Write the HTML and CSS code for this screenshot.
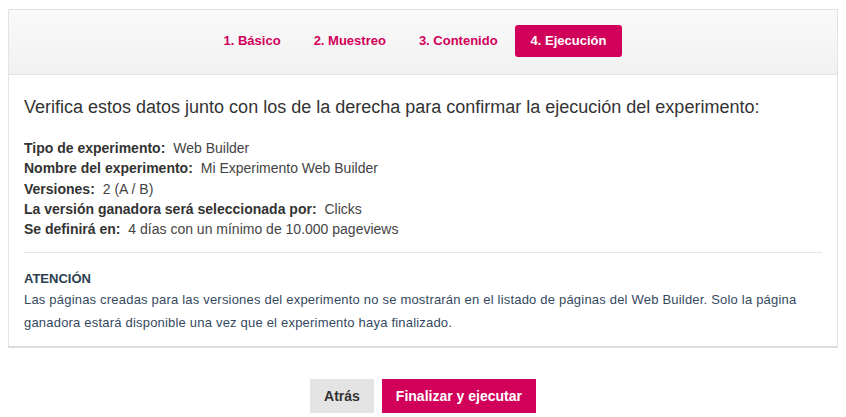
FILE: index.html
```html
<!DOCTYPE html>
<html lang="es">
<head>
    <meta charset="UTF-8" />
    <title>Ejecución del experimento</title>
    <meta name="viewport" content="width=device-width, initial-scale=1.0" />
    <link rel="stylesheet" href="styles.css">
</head>
<body>

<div class="card">
    <div class="steps">
        <a class="step" href="#">1. Básico</a>
        <a class="step" href="#">2. Muestreo</a>
        <a class="step" href="#">3. Contenido</a>
        <a class="step active" href="#">4. Ejecución</a>
    </div>

    <div class="content">
        <h2>Verifica estos datos junto con los de la derecha para confirmar la ejecución del experimento:</h2>

        <ul class="summary">
            <li><strong>Tipo de experimento:</strong> Web Builder</li>
            <li><strong>Nombre del experimento:</strong> Mi Experimento Web Builder</li>
            <li><strong>Versiones:</strong> 2 (A / B)</li>
            <li><strong>La versión ganadora será seleccionada por:</strong> Clicks</li>
            <li><strong>Se definirá en:</strong> 4 días con un mínimo de 10.000 pageviews</li>
        </ul>

        <div class="notice">
            <h4>ATENCIÓN</h4>
            <p>Las páginas creadas para las versiones del experimento no se mostrarán en el listado de páginas del Web Builder. Solo la página ganadora estará disponible una vez que el experimento haya finalizado.</p>
        </div>
    </div>
</div>

<div class="actions">
    <button class="btn btn-back">Atrás</button>
    <button class="btn btn-primary">Finalizar y ejecutar</button>
</div>

</body>
</html>
```

FILE: styles.css
```css
body {
  margin: 0;
  padding: 9px 8px 0 8px;
  font-family: "Liberation Sans", Arial, sans-serif;
  background: #fff;
  color: #333;
}
.card {
  border: 1px solid #e3e3e3;
  border-bottom: 2px solid #dcdcdc;
  background: #fff;
}
.steps {
  display: flex;
  justify-content: center;
  gap: 1px;
  padding: 15px 16px 17px 0;
  background: linear-gradient(#fafafa, #f1f1f1);
  border-bottom: 1px solid #e3e3e3;
}
.step {
  display: block;
  padding: 0 16px;
  height: 32px;
  line-height: 32px;
  font-size: 13px;
  font-weight: bold;
  color: #d1005a;
  text-decoration: none;
  border-radius: 3px;
}
.step.active {
  background: #d1005a;
  color: #fff;
}
.content {
  padding: 20px 15px 12px 15px;
}
h2 {
  margin: 0 0 19px 0;
  font-size: 18px;
  font-weight: normal;
  line-height: 24px;
  color: #333;
}
.summary {
  list-style: none;
  margin: 0;
  padding: 0 0 13px 0;
  border-bottom: 1px solid #e6e6e6;
}
.summary li {
  font-size: 14px;
  line-height: 20.3px;
  color: #444;
}
.summary strong {
  color: #333;
  margin-right: 4px;
}
.notice {
  padding-top: 17px;
}
.notice h4 {
  margin: 0 0 1px 0;
  font-size: 13px;
  line-height: 17px;
  color: #2c3e50;
}
.notice p {
  margin: 0;
  font-size: 13px;
  letter-spacing: 0.2px;
  line-height: 23px;
  color: #34495e;
}
.actions {
  display: flex;
  justify-content: center;
  gap: 8px;
  padding-top: 31px;
}
.btn {
  border: none;
  height: 34px;
  padding: 0 14px;
  font-family: "Liberation Sans", Arial, sans-serif;
  font-size: 14px;
  font-weight: bold;
  cursor: pointer;
}
.btn-back {
  background: #e4e4e4;
  color: #333;
}
.btn-primary {
  background: #d1005a;
  color: #fff;
}
```
